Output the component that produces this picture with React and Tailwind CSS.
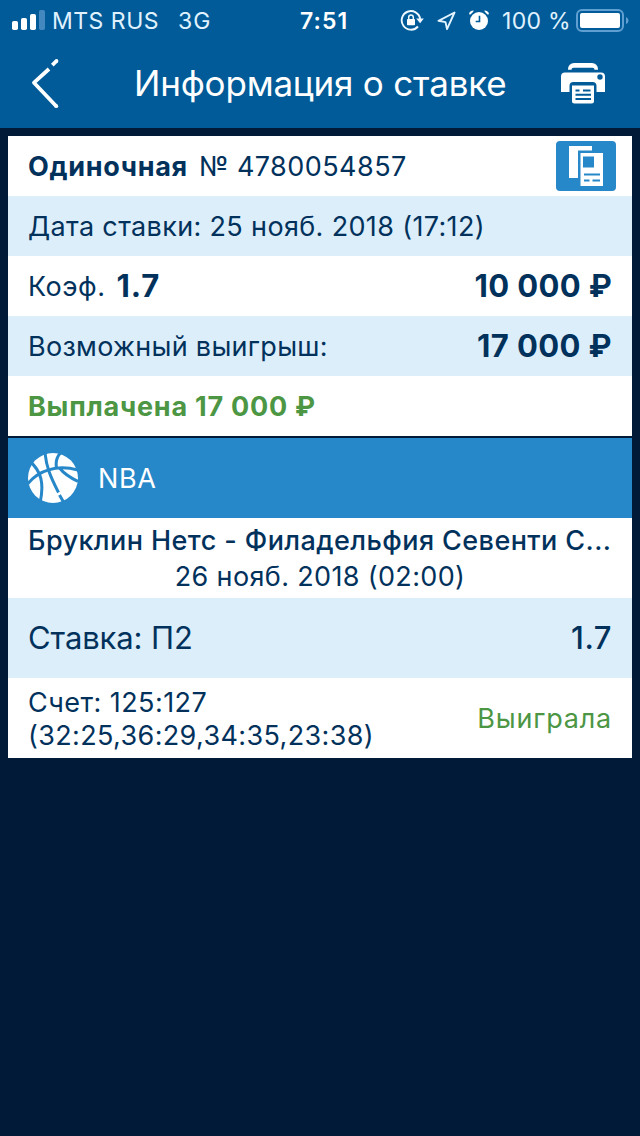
function StatusBar() {
  return (
    <div className="flex h-10 shrink-0 items-center pl-3 pr-[11px] text-[23px] leading-none text-[#e0f2ff]">
      <svg className="h-5 w-[34px] shrink-0" viewBox="0 0 34 20" fill="#fff">
        <rect x="0" y="11" width="6" height="9" rx="1.8" />
        <rect x="9" y="8" width="6" height="12" rx="1.8" />
        <rect x="18" y="4" width="6" height="16" rx="1.8" />
        <rect x="27" y="0" width="6" height="20" rx="1.8" fill="#4389c0" />
      </svg>
      <span className="ml-1.5 w-[108px] pt-0.5 tracking-[0.5px] whitespace-nowrap">MTS RUS</span>
      <span className="ml-[18px] w-[35px] pt-0.5 tracking-[1px]">3G</span>
      <span className="ml-[87px] w-[52px] pt-0.5 font-semibold tracking-[1.1px] text-white">7:51</span>
      <div className="ml-auto flex items-center">
        <svg className="h-[22px] w-6" viewBox="0 0 24 22" fill="none" stroke="#eef8ff" strokeWidth="1.9">
          <path d="M18 17.500A9.300 9.300 0 1 1 20.200 10" />
          <path d="M16.200 9.600h7.600l-3.700 4.600z" fill="#eef8ff" stroke="none" />
          <rect x="7" y="10" width="8" height="6.300" rx="0.800" fill="#fff" stroke="none" />
          <path d="M8.700 10.500V8.300a2.300 2.300 0 0 1 4.600 0v2.200" strokeWidth="1.500" />
        </svg>
        <svg className="ml-[13px] h-5 w-[19px]" viewBox="0 0 19 20" fill="none" stroke="#e4f4ff" strokeWidth="1.900" strokeLinejoin="round">
          <path d="M17.500 2.500L1.500 10.800l7 1.300 1.500 7z" />
        </svg>
        <svg className="ml-[13px] h-[22px] w-5" viewBox="0 0 20 22">
          <circle cx="10" cy="12" r="9" fill="#fff" />
          <path d="M10.500 6.800v5.700H6.700" fill="none" stroke="#005b98" strokeWidth="1.600" />
          <path d="M0 5.200Q.5 1.500 4.800 1.500L4 3 1.500 5.600zM20 5.200Q19.500 1.500 15.200 1.500L16 3l2.500 2.600z" fill="#fff" />
        </svg>
        <span className="ml-[13px] w-[71px] pt-0.5 tracking-[0.3px] whitespace-nowrap">100 %</span>
        <svg className="ml-[3px] h-6 w-[53px]" viewBox="0 0 53 24">
          <rect x="1" y="2" width="46" height="21" rx="5" fill="none" stroke="#5f9fd2" strokeWidth="2" />
          <rect x="4" y="5" width="40" height="15" rx="2" fill="#fff" />
          <path d="M50 9q2.500 1 2.500 3.500t-2.500 3.500z" fill="#5f9fd2" />
        </svg>
      </div>
    </div>
  );
}

function BackIcon() {
  return (
    <svg className="h-[52px] w-8" viewBox="0 0 32 52" fill="none" stroke="#fff" strokeWidth="3.800">
      <path d="M21 11L6 24.700 28.300 48.200" strokeLinejoin="round" />
      <path d="M24.300 7.200L28.500 3" />
      <g fill="#fff" stroke="none">
        <circle cx="28.300" cy="48.200" r="1.900" />
        <circle cx="28.500" cy="3" r="1.900" />
      </g>
    </svg>
  );
}

function PrinterIcon() {
  return (
    <svg className="h-[42px] w-[44px]" viewBox="0 0 44 42">
      <path d="M7 6.800V6a6 6 0 0 1 6-6h18a6 6 0 0 1 6 6v.800h-3.500a2 2 0 0 0-2-2h-19a2 2 0 0 0-2 2z" fill="#fff" />
      <path d="M4 9.500h36a4 4 0 0 1 4 4V29h-8.500v-6a4 4 0 0 0-4-4h-19a4 4 0 0 0-4 4v6H0V13.500a4 4 0 0 1 4-4z" fill="#fff" />
      <circle cx="39" cy="14" r="2.700" fill="#005b98" />
      <path d="M11 22.500h22V38a2.500 2.500 0 0 1-2.500 2.500h-17A2.500 2.500 0 0 1 11 38z" fill="#fff" />
      <path d="M14.500 27.500h4M22 27.500h7.500M14.500 31.800h15.500M14.500 36h15.500" stroke="#005b98" strokeWidth="2" />
    </svg>
  );
}

function CouponIcon() {
  return (
    <svg className="h-[50px] w-[60px]" viewBox="0 0 60 50">
      <rect width="60" height="50" rx="4" fill="#2687c9" />
      <path d="M13 5h23v4.500H22V37h-9z" fill="#fff" />
      <path d="M24.500 12H47v33H24.500z" fill="#fff" />
      <path d="M27 15.500h11v11H27z" fill="#2687c9" />
      <path d="M28 33.500h16M28 39.500h5.500M36.500 39.500H44" stroke="#2687c9" strokeWidth="2.200" />
    </svg>
  );
}

function BasketballIcon() {
  return (
    <svg className="h-[50px] w-[50px]" viewBox="0 0 50 50">
      <circle cx="25" cy="25" r="25" fill="#fff" />
      <g fill="none" stroke="#2687c9" strokeWidth="3">
        <path d="M0 30.500C10 18 28 11 50 17" />
        <path d="M2 8.500C13 18 16.500 30 12 50" />
        <path d="M17 0C18.500 14 22 23 30.500 39.500M31.500 42L35.500 49" />
        <path d="M32.500 0C28.500 4 27.500 9 28.500 15M32 15.500Q37 22 50 28.500" />
      </g>
    </svg>
  );
}

function Row({ tinted, children, className = "h-[60px]" }) {
  return (
    <div className={`flex items-center justify-between pl-5 pr-5 ${tinted ? "bg-[#dceefa]" : "bg-white"} ${className}`}>
      {children}
    </div>
  );
}

export default function App() {
  return (
    <div className="flex h-[1136px] w-[640px] flex-col bg-[#001a38] font-['Inter',sans-serif] text-[27px] leading-none whitespace-nowrap text-[#02325c]">
      <header className="flex h-32 flex-col bg-[#005b98] text-white">
        <StatusBar />
        <div className="flex h-[88px] items-center pl-7 pr-[35px]">
          <BackIcon />
          <h1 className="ml-[74px] pb-px text-[35px] tracking-[-0.2px]">Информация о ставке</h1>
          <div className="ml-auto">
            <PrinterIcon />
          </div>
        </div>
      </header>

      <main className="flex flex-col gap-0.5 px-2 pt-2">
        <section>
          <div className="flex h-[60px] items-center bg-white pl-5 pr-4">
            <b className="font-bold tracking-[0.7px]">Одиночная</b>
            <span className="ml-[11px] tracking-[0.45px]">№ 4780054857</span>
            <div className="ml-auto">
              <CouponIcon />
            </div>
          </div>
          <Row tinted>
            <span className="tracking-[0.35px]">Дата ставки: 25 нояб. 2018 (17:12)</span>
          </Row>
          <Row>
            <div className="flex items-center">
              <span className="tracking-[0.5px]">Коэф.</span>
              <b className="ml-[11px] pb-0.5 text-[31px] font-bold tracking-[1px]">1.7</b>
            </div>
            <b className="pb-0.5 text-[31px] font-bold tracking-[0.35px]">10 000 ₽</b>
          </Row>
          <Row tinted>
            <span className="tracking-[0.3px]">Возможный выигрыш:</span>
            <b className="pb-0.5 text-[31px] font-bold tracking-[0.4px]">17 000 ₽</b>
          </Row>
          <Row>
            <b className="font-bold tracking-[0.76px] text-[#4c9644]">Выплачена 17 000 ₽</b>
          </Row>
        </section>

        <section>
          <div className="flex h-20 items-center bg-[#2687c9] pl-5 text-white">
            <BasketballIcon />
            <span className="ml-5 tracking-[0.6px]">NBA</span>
          </div>
          <div className="flex h-20 flex-col bg-white px-5 pt-1">
            <span className="flex h-9 items-center font-medium tracking-[0.42px]">Бруклин Нетс - Филадельфия Севенти С...</span>
            <span className="flex h-9 items-center justify-center tracking-[0.35px]">26 нояб. 2018 (02:00)</span>
          </div>
          <Row tinted className="h-20 pb-0.5 text-[31px]">
            <span className="tracking-[-0.1px]">Ставка: П2</span>
            <span className="font-medium tracking-[0.5px]">1.7</span>
          </Row>
          <Row className="h-20">
            <div className="pt-0.5 leading-[33px]">
              <div className="tracking-[0.45px]">Счет: 125:127</div>
              <div className="tracking-[0.36px]">(32:25,36:29,34:35,23:38)</div>
            </div>
            <span className="tracking-[0.8px] text-[#4c9644]">Выиграла</span>
          </Row>
        </section>
      </main>
    </div>
  );
}
